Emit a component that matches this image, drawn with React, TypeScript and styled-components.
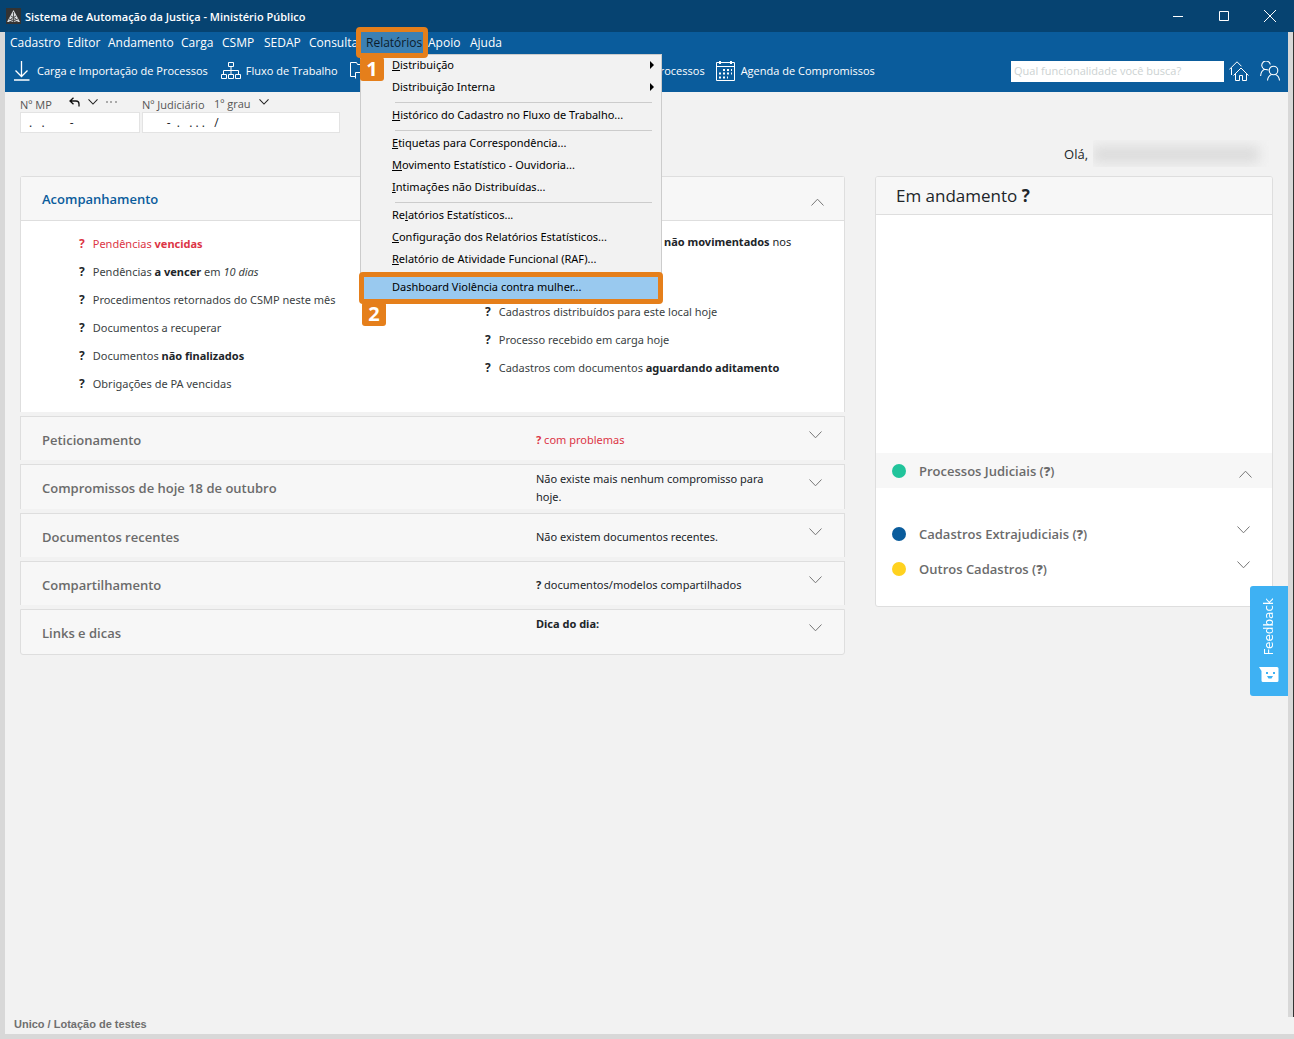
import React from 'react';
import styled, { createGlobalStyle } from 'styled-components';

const color = {
  title: '#064371',
  bar: '#0a5c9c',
  page: '#f2f2f2',
  frame: '#d8d8d8',
  line: '#dedede',
  head: '#f7f7f7',
  orange: '#e57f1b',
  red: '#dc3545',
  text: '#212529',
  muted: '#6b6b6b',
  accent: '#0a5c9c',
};

const compact = '"Noto Sans", "Open Sans", sans-serif';

const GlobalStyle = createGlobalStyle`
  *, *::before, *::after { box-sizing: border-box; }
  body { margin: 0; background: ${color.page}; }
  body, button, input, select {
    font-family: "Open Sans", "Noto Sans", sans-serif;
    font-size: 12px;
    line-height: 18px;
    color: ${color.text};
  }
  button { border: 0; padding: 0; background: none; text-align: left; }
  ul { list-style: none; margin: 0; padding: 0; }
  h1, h2, p { margin: 0; font-size: inherit; font-weight: inherit; }
  svg { display: block; flex: none; }
`;

const Window = styled.div`
  display: grid;
  grid-template-columns: 5px minmax(0, 1fr) 6px;
  grid-template-rows: 32px auto 1fr 17px 5px;
  min-height: 100vh;
  background: ${color.frame};
`;

const TitleBar = styled.header`
  grid-column: 1 / -1;
  display: flex;
  align-items: center;
  padding: 0 1px 0 6px;
  background: ${color.title};
  color: #fff;
`;

const WindowTitle = styled.h1`
  flex: 1;
  padding: 2px 0 0 4px;
  font-size: 11px;
  font-weight: 600;
`;

const WindowButton = styled.button`
  display: grid;
  place-items: center;
  width: 46px;
  height: 32px;
`;

const RightEdge = styled.div`
  grid-column: 3;
  grid-row: 2 / 4;
  border-right: 1px solid #333;
`;

const BlueArea = styled.div`
  grid-column: 2;
  grid-row: 2;
  background: ${color.bar};
  color: #fff;
`;

const MenuBar = styled.nav`
  display: grid;
  grid-template-columns: 57px 41px 73px 41px 42px 45px 57px 62px 42px 47px;
  height: 20px;
`;

const MenuButton = styled.button`
  padding-left: 5px;
  height: 21px;
  color: #fff;
  white-space: nowrap;
  font-size: 12px;
`;

const OpenMenu = styled.div`
  position: relative;
  z-index: 5;
  height: 21px;
  background: #3c80b3;
`;

const OpenMenuButton = styled(MenuButton)`
  position: relative;
  width: 100%;
  color: #0b1c2c;
  &::after {
    content: '';
    position: absolute;
    inset: -5px;
    border: 5px solid ${color.orange};
    border-radius: 4px;
  }
`;

const Step = styled.span`
  position: absolute;
  z-index: 2;
  left: ${(p: { $left: number; $top: number }) => p.$left}px;
  top: ${(p) => p.$top}px;
  width: 24px;
  height: 24px;
  border-radius: 3px;
  background: ${color.orange};
  color: #fff;
  font-size: 20px;
  font-weight: 700;
  line-height: 24px;
  text-align: center;
`;

const Dropdown = styled.ul`
  position: absolute;
  left: -1px;
  top: 22px;
  width: 302px;
  border: 1px solid #ccc;
  background: ${color.page};
  color: #000;
`;

const DropdownItem = styled.li`
  position: relative;
`;

const DropdownButton = styled.button<{ $active?: boolean }>`
  display: flex;
  align-items: center;
  justify-content: space-between;
  width: 100%;
  height: 22px;
  padding: 0 6px 2px 31px;
  color: #000;
  white-space: nowrap;
  font-family: ${compact};
  font-size: 11px;
  ${(p) =>
    p.$active &&
    `background: #99c9ef;
    &::after {
      content: '';
      position: absolute;
      inset: -5px -2px;
      border: 5px solid ${color.orange};
      border-radius: 4px;
    }`}
`;

const Separator = styled.li`
  height: 6px;
  margin: 0 9px 0 34px;
  background: linear-gradient(#ccc, #ccc) center / 100% 1px no-repeat;
`;

const Toolbar = styled.div`
  display: flex;
  align-items: center;
  height: 40px;
  padding: 0 8px 2px 9px;
`;

const Tool = styled.button<{ $gap: number; $after: number; $width?: number }>`
  display: flex;
  align-items: center;
  justify-content: space-between;
  gap: ${(p) => p.$gap}px;
  margin-right: ${(p) => p.$after}px;
  width: ${(p) => (p.$width ? `${p.$width}px` : 'auto')};
  color: #fff;
  white-space: nowrap;
  font-size: 11px;
`;

const ToolIcons = styled.div`
  display: flex;
  gap: 11px;
  padding-left: 5px;
`;

const Search = styled.input`
  width: 213px;
  height: 21px;
  margin-left: auto;
  padding: 0 3px 2px;
  border: 0;
  font-size: 11px;
  &::placeholder { color: #ccd2d2; }
`;

const Content = styled.main`
  position: relative;
  grid-column: 2;
  grid-row: 3;
  padding: 4px 15px 0;
  background: ${color.page};
`;

const Fields = styled.div`
  display: flex;
  gap: 2px;
`;

const Field = styled.div<{ $width: number }>`
  width: ${(p) => p.$width}px;
`;

const FieldHead = styled.div`
  display: flex;
  align-items: center;
  height: 16px;
  color: #555;
`;

const FieldLabel = styled.label<{ $width: number }>`
  width: ${(p) => p.$width}px;
  padding-top: 2px;
  font-size: 11px;
  white-space: nowrap;
`;

const FieldIcons = styled.span`
  display: flex;
  align-items: center;
  gap: 8px;
  padding-bottom: 4px;
`;

const Degree = styled.select`
  appearance: none;
  width: 45px;
  height: 18px;
  padding: 0;
  border: 0;
  background: none;
  color: #555;
  font-size: 11px;
`;

const NumberInput = styled.input`
  width: 100%;
  height: 21px;
  padding: 0 5px;
  border: 1px solid #e3e3e3;
  background: #fff;
`;

const Greeting = styled.p`
  display: flex;
  justify-content: flex-end;
  align-items: center;
  gap: 5px;
  height: 43px;
  padding: 0 4px 2px 0;
  font-size: 13px;
`;

const HiddenName = styled.span`
  width: 176px;
  height: 27px;
  padding: 6px 10px 4px 0;
  overflow: hidden;
  &::before {
    content: '';
    display: block;
    height: 17px;
    background: #dcdcdc;
    filter: blur(6px);
  }
`;

const Columns = styled.div`
  display: grid;
  grid-template-columns: minmax(0, 1fr) 398px;
  align-items: start;
  gap: 30px;
`;

const Accordion = styled.div`
  display: flex;
  flex-direction: column;
  gap: 4px;
`;

const Panel = styled.section`
  border: 1px solid ${color.line};
  border-bottom: 0;
  border-radius: 3px 3px 0 0;
  background: #fff;
`;

const PanelHead = styled.div`
  display: flex;
  align-items: center;
  justify-content: space-between;
  height: 44px;
  padding: 0 20px 0 21px;
  border-bottom: 1px solid ${color.line};
  background: ${color.head};
`;

const Title = styled.h2<{ $active?: boolean }>`
  color: ${(p) => (p.$active ? color.accent : color.muted)};
  font-size: 13px;
  font-weight: 600;
  line-height: 18px;
`;

const Toggle = styled.button<{ $top?: number }>`
  padding-top: ${(p) => p.$top ?? 0}px;
`;

const PanelBody = styled.div`
  display: grid;
  grid-template-columns: 406px minmax(0, 1fr);
  height: 191px;
  padding: 9px 20px 0 58px;
`;

const PendingItem = styled.li<{ $red?: boolean }>`
  display: flex;
  align-items: center;
  gap: 8px;
  height: 28px;
  color: ${(p) => (p.$red ? color.red : '#3b3f43')};
  white-space: nowrap;
  font-family: ${compact};
  font-size: 11px;
  b { color: ${(p) => (p.$red ? color.red : color.text)}; }
  > b { font-size: 12px; }
`;

const CoveredItem = styled.li`
  height: 68px;
  padding: 3px 0 0 179px;
  white-space: nowrap;
  font-family: ${compact};
  font-size: 11px;
`;

const Row = styled.section`
  display: grid;
  grid-template-columns: minmax(0, 1fr) 261px 25px;
  min-height: 44px;
  padding: 5px 22px 3px 21px;
  border: 1px solid ${color.line};
  border-bottom: 0;
  background: ${color.head};
  align-items: center;
  &:last-child { min-height: 46px; border-bottom: 1px solid ${color.line}; border-radius: 0 0 3px 3px; }
`;

const RowText = styled.p<{ $red?: boolean; $top?: boolean }>`
  padding-right: 20px;
  color: ${(p) => (p.$red ? color.red : color.text)};
  align-self: ${(p) => (p.$top ? 'start' : 'center')};
  font-family: ${compact};
  font-size: 11px;
`;

const RowToggle = styled.button`
  align-self: start;
  justify-self: end;
  padding-top: 9px;
`;

const SideCard = styled.aside`
  border: 1px solid ${color.line};
  border-radius: 3px;
  background: #fff;
  overflow: hidden;
  padding-bottom: 20px;
`;

const SideHead = styled.div`
  height: 38px;
  padding-left: 20px;
  border-bottom: 1px solid ${color.line};
  background: ${color.head};
  font-size: 17px;
  line-height: 37px;
`;

const SideBlank = styled.div`
  height: 238px;
`;

const SideRow = styled.div<{ $open?: boolean }>`
  display: flex;
  align-items: center;
  gap: 13px;
  height: 35px;
  padding: 0 ${(p) => (p.$open ? 20 : 22)}px 0 16px;
  margin-bottom: ${(p) => (p.$open ? 28 : 0)}px;
  background: ${(p) => (p.$open ? color.head : '#fff')};
  ${Title} { flex: 1; }
  ${Toggle} { align-self: start; }
`;

const Dot = styled.span<{ $color: string }>`
  width: 14px;
  height: 14px;
  border-radius: 50%;
  background: ${(p) => p.$color};
`;

const Feedback = styled.button`
  position: absolute;
  right: 0;
  top: 494px;
  display: flex;
  flex-direction: column;
  align-items: center;
  justify-content: space-between;
  width: 38px;
  height: 110px;
  padding: 12px 0 14px;
  border-radius: 3px 0 0 3px;
  background: #3eb1f3;
  color: #fff;
`;

const FeedbackText = styled.span`
  writing-mode: vertical-rl;
  transform: rotate(180deg);
  font-family: "DejaVu Sans", sans-serif;
  font-size: 12px;
`;

const StatusBar = styled.footer`
  grid-column: 2 / 4;
  grid-row: 4;
  padding-left: 9px;
  background: ${color.page};
  color: #6f6f6f;
  font-family: "Liberation Sans", Arial, sans-serif;
  font-size: 11px;
  font-weight: 700;
  line-height: 14px;
`;

function Chevron({ up, dark, size = 13 }: { up?: boolean; dark?: boolean; size?: number }) {
  return (
    <svg width={size} height={size > 10 ? 8 : 6} viewBox="0 0 13 8" fill="none" stroke={dark ? '#222' : '#777'} strokeWidth={dark ? 1.4 : 1}>
      <path d={up ? 'M.5 7.5 6.5 1.2l6 6.3' : 'M.5.5l6 6.3 6-6.3'} />
    </svg>
  );
}

const Logo = () => (
  <svg width="15" height="16" viewBox="0 0 15 16">
    <rect width="15" height="16" fill="#333" />
    <path d="M7.5 2 14 14H1z" fill="#d9dcdf" />
    <path d="M7.5 4v10M3 11l9 3M12 11l-9 3M5 8l5 3M10 8l-5 3" stroke="#444" strokeWidth=".9" />
  </svg>
);

const Download = () => (
  <svg width="16" height="20" viewBox="0 0 16 20" fill="none" stroke="#fff" strokeWidth="1.3">
    <path d="M7.5 0v15M1.500 9.500l6 6 6-6M0 19h15.500" />
  </svg>
);

const Sitemap = () => (
  <svg width="20" height="18" viewBox="0 0 20 18" fill="none" stroke="#fff">
    <path d="M7.500.5h5v4h-5zM.5 12.500h5v4h-5zM7.500 12.500h5v4h-5zM14.500 12.500h5v4h-5zM10 4.500v8M2.500 12.500v-4h15v4" />
  </svg>
);

const Folders = () => (
  <svg width="20" height="20" viewBox="0 0 20 20" fill="none" stroke="#fff">
    <path d="M5 15.500H.5V1.500h6l1 2h8v5M5.500 17.500v-6h5l1 2h7v6" />
  </svg>
);

const Calendar = () => (
  <svg width="19" height="20" viewBox="0 0 19 20" fill="none" stroke="#fff">
    <path d="M.5 1.500h18v18H.5zM0 5.500h19" />
    <path d="M4 0v3M15 0v3" strokeWidth="2" />
    <path d="M7 9h9M3 12.500h13M3 16.500h9" strokeWidth="2" strokeDasharray="2 2" />
  </svg>
);

const Houses = () => (
  <svg width="20" height="20" viewBox="0 0 20 20" fill="none" stroke="#fff">
    <path d="M2.500 14V7M.3 8.500 8 .8l4.500 4.500M4.500 14.500 12 7l7.500 7.500M6.500 13v6.500h4v-5h3v5h4V13" />
  </svg>
);

const People = () => (
  <svg width="20" height="20" viewBox="0 0 20 20" fill="none" stroke="#fff" strokeWidth="1.1">
    <path d="M4.500 8.300A4.300 4.300 0 1 1 10.300 3.500M4.500 8.300C2 9.500.8 12 .6 15M4.500 8.300l4 .7" />
    <circle cx="13.500" cy="9.500" r="4.300" />
    <path d="M7.500 19.500c.3-3 1.500-5 4-6M19.500 19.500c-.3-3-1.500-5-4-6" />
  </svg>
);

const Undo = () => (
  <svg width="11" height="10" viewBox="0 0 11 10" fill="none" stroke="#111" strokeWidth="1.300">
    <path d="M4.500.8 1 4l3.500 3.200M1 4h6c2 0 3 1.300 3 3v2.500" />
  </svg>
);

const Dots = () => (
  <svg width="11" height="2" viewBox="0 0 11 2" fill="#aaa">
    <path d="M0 0h2v2H0zM4 0h2v2H4zM9 0h2v2H9z" />
  </svg>
);

const Smile = () => (
  <svg width="20" height="15" viewBox="0 0 20 15">
    <path d="M0 0h18a1.500 1.500 0 0 1 1.500 1.500v12A1.500 1.500 0 0 1 18 15H4a1.500 1.500 0 0 1-1.500-1.500V4z" fill="#fff" />
    <path d="M7 5h2v2H7zM14 5h2v2h-2zM8 9h6l-1.500 2.500h-3z" fill="#3eb1f3" />
  </svg>
);

const Arrow = () => (
  <svg width="6" height="8" viewBox="0 0 6 8">
    <path d="M1 0l4 4-4 4z" />
  </svg>
);

type Entry = { pre?: string; key?: string; post: string; sub?: boolean };

const menuGroups: Entry[][] = [
  [
    { key: 'D', post: 'istribuição', sub: true },
    { post: 'Distribuição Interna', sub: true },
  ],
  [{ key: 'H', post: 'istórico do Cadastro no Fluxo de Trabalho...' }],
  [
    { key: 'E', post: 'tiquetas para Correspondência...' },
    { key: 'M', post: 'ovimento Estatístico - Ouvidoria...' },
    { key: 'I', post: 'ntimações não Distribuídas...' },
  ],
  [
    { pre: 'Re', key: 'l', post: 'atórios Estatísticos...' },
    { key: 'C', post: 'onfiguração dos Relatórios Estatísticos...' },
    { key: 'R', post: 'elatório de Atividade Funcional (RAF)...' },
  ],
];

const rows: { title: string; text: React.ReactNode; red?: boolean; top?: boolean }[] = [
  { title: 'Peticionamento', text: <><b>?</b> com problemas</>, red: true },
  { title: 'Compromissos de hoje 18 de outubro', text: 'Não existe mais nenhum compromisso para hoje.' },
  { title: 'Documentos recentes', text: 'Não existem documentos recentes.' },
  { title: 'Compartilhamento', text: <><b>?</b> documentos/modelos compartilhados</> },
  { title: 'Links e dicas', text: <b>Dica do dia:</b>, top: true },
];

const cases = [
  { title: 'Processos Judiciais', color: '#21c49b', open: true },
  { title: 'Cadastros Extrajudiciais', color: '#0a5c9c' },
  { title: 'Outros Cadastros', color: '#ffd21f' },
];

function ReportsMenu() {
  return (
    <OpenMenu>
      <Dropdown>
        {menuGroups.map((group, i) => (
          <React.Fragment key={i}>
            {group.map((e) => (
              <DropdownItem key={e.post}>
                <DropdownButton>
                  <span>{e.pre}{e.key && <u>{e.key}</u>}{e.post}</span>
                  {e.sub && <Arrow />}
                </DropdownButton>
              </DropdownItem>
            ))}
            <Separator />
          </React.Fragment>
        ))}
        <DropdownItem>
          <DropdownButton $active>Dashboard Violência contra mulher...</DropdownButton>
          <Step $left={1} $top={25}>2</Step>
        </DropdownItem>
      </Dropdown>
      <OpenMenuButton>Relatórios</OpenMenuButton>
      <Step $left={-1} $top={25}>1</Step>
    </OpenMenu>
  );
}

export default function App() {
  return (
    <Window>
      <GlobalStyle />
      <TitleBar>
        <Logo />
        <WindowTitle>Sistema de Automação da Justiça - Ministério Público</WindowTitle>
        <WindowButton aria-label="Minimizar">
          <svg width="10" height="1"><rect width="10" height="1" fill="#fff" /></svg>
        </WindowButton>
        <WindowButton aria-label="Maximizar">
          <svg width="10" height="10" fill="none" stroke="#fff"><path d="M.5.5h9v9h-9z" /></svg>
        </WindowButton>
        <WindowButton aria-label="Fechar">
          <svg width="12" height="12" stroke="#fff"><path d="M0 0l12 12M12 0L0 12" /></svg>
        </WindowButton>
      </TitleBar>
      <BlueArea>
        <MenuBar>
          {['Cadastro', 'Editor', 'Andamento', 'Carga', 'CSMP', 'SEDAP', 'Consulta'].map((m) => (
            <MenuButton key={m}>{m}</MenuButton>
          ))}
          <ReportsMenu />
          <MenuButton>Apoio</MenuButton>
          <MenuButton>Ajuda</MenuButton>
        </MenuBar>
        <Toolbar>
          <Tool $gap={7} $after={13}><Download />Carga e Importação de Processos</Tool>
          <Tool $gap={5} $after={12}><Sitemap />Fluxo de Trabalho</Tool>
          <Tool $gap={0} $after={11} $width={355}><Folders />Processos</Tool>
          <Tool $gap={6} $after={0}><Calendar />Agenda de Compromissos</Tool>
          <Search aria-label="Buscar funcionalidade" placeholder="Qual funcionalidade você busca?" />
          <ToolIcons>
            <button aria-label="Início"><Houses /></button>
            <button aria-label="Usuários"><People /></button>
          </ToolIcons>
        </Toolbar>
      </BlueArea>
      <RightEdge />
      <Content>
        <Fields>
          <Field $width={120}>
            <FieldHead>
              <FieldLabel $width={49} htmlFor="mp">Nº MP</FieldLabel>
              <FieldIcons><Undo /><Chevron dark size={10} /><Dots /></FieldIcons>
            </FieldHead>
            <NumberInput id="mp" defaultValue=" .   .        -" />
          </Field>
          <Field $width={198}>
            <FieldHead>
              <FieldLabel $width={72} htmlFor="jud">Nº Judiciário</FieldLabel>
              <Degree aria-label="Grau"><option>1º grau</option></Degree>
              <FieldIcons><Chevron dark size={10} /></FieldIcons>
            </FieldHead>
            <NumberInput id="jud" defaultValue="      -  .   . . .   /" />
          </Field>
        </Fields>
        <Greeting>Olá, <HiddenName /></Greeting>
        <Columns>
          <Accordion>
            <Panel>
              <PanelHead>
                <Title $active>Acompanhamento</Title>
                <Toggle $top={7} aria-label="Recolher"><Chevron up /></Toggle>
              </PanelHead>
              <PanelBody>
                <ul>
                  <PendingItem $red><b>?</b><span>Pendências <b>vencidas</b></span></PendingItem>
                  <PendingItem><b>?</b><span>Pendências <b>a vencer</b> em <i>10 dias</i></span></PendingItem>
                  <PendingItem><b>?</b><span>Procedimentos retornados do CSMP neste mês</span></PendingItem>
                  <PendingItem><b>?</b><span>Documentos a recuperar</span></PendingItem>
                  <PendingItem><b>?</b><span>Documentos <b>não finalizados</b></span></PendingItem>
                  <PendingItem><b>?</b><span>Obrigações de PA vencidas</span></PendingItem>
                </ul>
                <ul>
                  <CoveredItem><b>não movimentados</b> nos</CoveredItem>
                  <PendingItem><b>?</b><span>Cadastros distribuídos para este local hoje</span></PendingItem>
                  <PendingItem><b>?</b><span>Processo recebido em carga hoje</span></PendingItem>
                  <PendingItem><b>?</b><span>Cadastros com documentos <b>aguardando aditamento</b></span></PendingItem>
                </ul>
              </PanelBody>
            </Panel>
            {rows.map((r) => (
              <Row key={r.title}>
                <Title>{r.title}</Title>
                <RowText $red={r.red} $top={r.top}>{r.text}</RowText>
                <RowToggle aria-label={`Expandir ${r.title}`}><Chevron /></RowToggle>
              </Row>
            ))}
          </Accordion>
          <SideCard>
            <SideHead>Em andamento <b>?</b></SideHead>
            <SideBlank />
            {cases.map((c) => (
              <SideRow key={c.title} $open={c.open}>
                <Dot $color={c.color} />
                <Title>{c.title} (<b>?</b>)</Title>
                <Toggle $top={c.open ? 17 : 10} aria-label={c.title}><Chevron up={c.open} /></Toggle>
              </SideRow>
            ))}
          </SideCard>
        </Columns>
        <Feedback>
          <FeedbackText>Feedback</FeedbackText>
          <Smile />
        </Feedback>
      </Content>
      <StatusBar>Unico / Lotação de testes</StatusBar>
    </Window>
  );
}
